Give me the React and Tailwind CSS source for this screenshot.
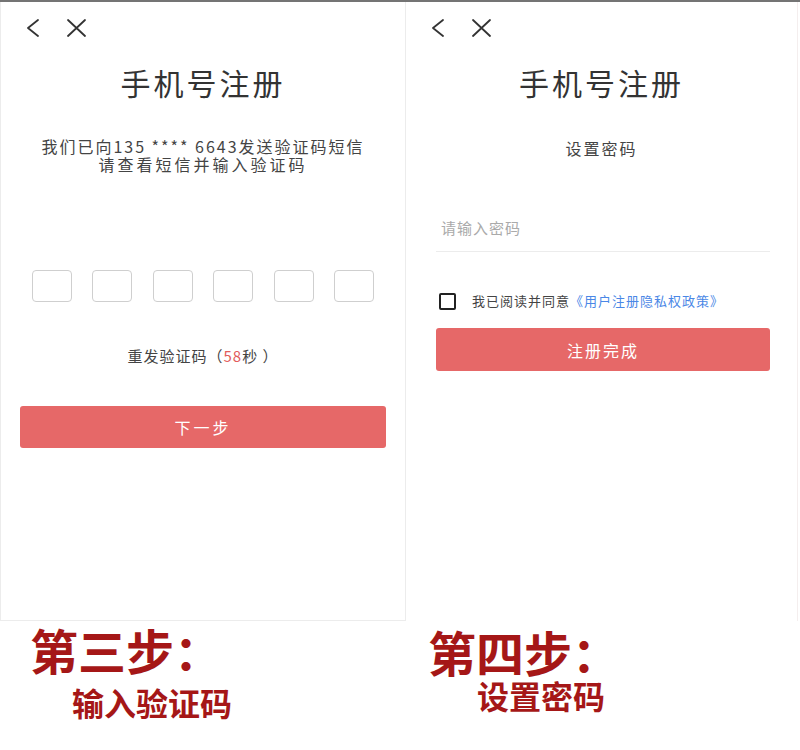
import React from "react";

const font = { fontFamily: '"Noto Sans CJK SC", "Noto Sans", sans-serif' };

function Back() {
  return (
    <svg width="14" height="18" viewBox="0 0 14 18" fill="none">
      <path d="M12 1 L2 9 L12 17" stroke="#333" strokeWidth="1.8" strokeLinecap="round" strokeLinejoin="round" />
    </svg>
  );
}

function Close() {
  return (
    <svg width="21" height="18" viewBox="0 0 21 18" fill="none">
      <path d="M2 1 L19 17 M19 1 L2 17" stroke="#333" strokeWidth="1.8" strokeLinecap="round" />
    </svg>
  );
}

function Header({ pl }) {
  return (
    <div className={`flex items-start pt-[17px] ${pl}`}>
      <Back />
      <div className="ml-[26px]">
        <Close />
      </div>
    </div>
  );
}

function Title() {
  return (
    <div className="mt-[27px] text-center text-[30px] leading-[36px] tracking-[3px] text-[#333]">
      手机号注册
    </div>
  );
}

export default function App() {
  return (
    <div className="w-[800px] h-[750px] bg-white border-t-2 border-[#747474] flex" style={font}>
      {/* Left column */}
      <div className="w-[406px] flex flex-col">
        <div className="h-[619px] border-l border-r border-b border-[#ececec] flex flex-col">
          <Header pl="pl-[25px]" />
          <Title />
          <div className="mt-[37px] text-center text-[16px] leading-[18px] tracking-[2px] text-[#444]">
            <div>我们已向135 **** 6643发送验证码短信</div>
            <div className="tracking-[3px]">请查看短信并输入验证码</div>
          </div>
          <div className="mt-[97px] flex gap-[20.4px] pl-[31px]">
            {[0, 1, 2, 3, 4, 5].map((i) => (
              <div key={i} className="w-[40px] h-[32px] border border-[#cfcfcf] rounded-[4px]" />
            ))}
          </div>
          <div className="mt-[44px] text-center text-[15px] leading-[20px] tracking-[1px] text-[#444]">
            重发验证码（<span className="text-[#e25c5c]">58</span>秒 ）
          </div>
          <div className="mt-[40px] mx-[19px] h-[42px] rounded-[3px] bg-[#e66868] flex items-center justify-center text-white text-[16px] tracking-[3px]">
            下一步
          </div>
        </div>
        <div className="pl-[30px] mt-[2px] text-[48px] leading-[52px] font-bold text-[#a51717]">第三步：</div>
        <div className="pl-[72px] mt-[9px] text-[32px] leading-[36px] font-bold text-[#a51717]">输入验证码</div>
      </div>

      {/* Right column */}
      <div className="w-[392px] flex flex-col">
        <div className="h-[619px] border-r border-[#f4eeee] flex flex-col">
          <Header pl="pl-[25px]" />
          <Title />
          <div className="mt-[38px] text-center text-[16px] leading-[20px] tracking-[2px] text-[#444]">设置密码</div>
          <div className="mt-[48px] ml-[30px] mr-[27px] h-[46px] border-b border-[#ececec] flex items-center pl-[5px] text-[15px] tracking-[1px] text-[#aaa]">
            请输入密码
          </div>
          <div className="mt-[39px] ml-[33px] h-[20px] flex items-center">
            <div className="w-[17px] h-[17px] border-2 border-[#222] rounded-[2px]" />
            <span className="ml-[16px] text-[13px] tracking-[1px] text-[#444]">我已阅读并同意</span>
            <span className="text-[13px] tracking-[1px] text-[#4a87e6]">《用户注册隐私权政策》</span>
          </div>
          <div className="mt-[17px] ml-[30px] mr-[27px] h-[43px] rounded-[3px] bg-[#e66868] flex items-center justify-center text-white text-[16px] tracking-[2px]">
            注册完成
          </div>
        </div>
        <div className="pl-[22px] mt-[5px] text-[48px] leading-[50px] font-bold text-[#a51717]">第四步：</div>
        <div className="pl-[71px] mt-[1px] text-[32px] leading-[36px] font-bold text-[#a51717]">设置密码</div>
      </div>
    </div>
  );
}
